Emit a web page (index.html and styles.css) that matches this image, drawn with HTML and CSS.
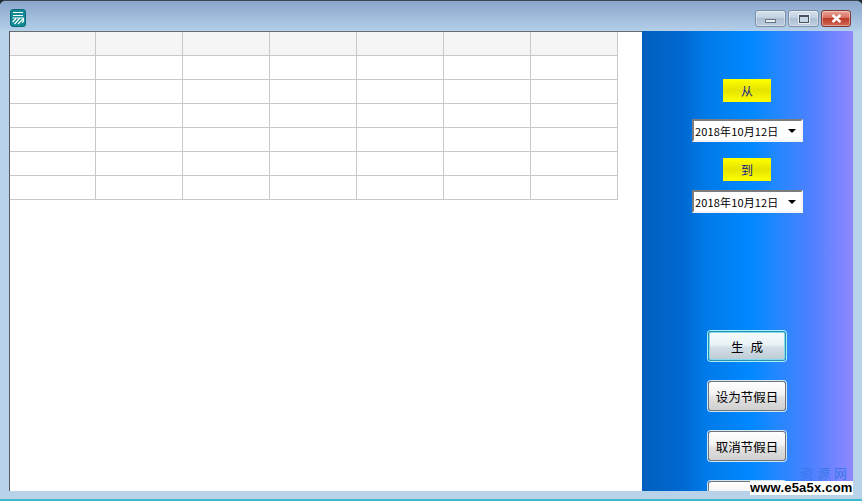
FILE: index.html
```
<!DOCTYPE html>
<html lang="zh">
<head>
<meta charset="utf-8">
<title>生成</title>
<link rel="stylesheet" href="styles.css">
</head>
<body>
<div class="window">
  <div class="titlebar">
    <svg class="app-icon" width="16" height="18" viewBox="0 0 16 18">
      <rect x="0.5" y="0.5" width="15" height="17" rx="2.5" fill="#0f8a94" stroke="#0a6a78"/>
      <path d="M3 3.5H13M3 6.5H13" stroke="#fff" stroke-width="1.2" fill="none"/>
      <path d="M2.5 9H13.5V12L12 14M2.5 13L6 9.5M4.5 15L9.5 9.5M8 15L13 10" stroke="#fff" stroke-width="1.2" fill="none"/>
    </svg>
    <div class="caption-buttons">
      <div class="cap-btn"><span class="glyph-min"></span></div>
      <div class="cap-btn"><span class="glyph-max"></span></div>
      <div class="cap-btn cap-close">
        <svg width="11" height="9" viewBox="0 0 11 9"><path d="M1.5 1L9.5 8M9.5 1L1.5 8" stroke="#fff" stroke-width="2.4" fill="none"/></svg>
      </div>
    </div>
  </div>
  <div class="client">
    <div class="main">
      <div class="grid">
        <div class="row head"><i></i><i></i><i></i><i></i><i></i><i></i><i></i></div>
        <div class="row"><i></i><i></i><i></i><i></i><i></i><i></i><i></i></div>
        <div class="row"><i></i><i></i><i></i><i></i><i></i><i></i><i></i></div>
        <div class="row"><i></i><i></i><i></i><i></i><i></i><i></i><i></i></div>
        <div class="row"><i></i><i></i><i></i><i></i><i></i><i></i><i></i></div>
        <div class="row"><i></i><i></i><i></i><i></i><i></i><i></i><i></i></div>
        <div class="row"><i></i><i></i><i></i><i></i><i></i><i></i><i></i></div>
      </div>
    </div>
    <div class="side">
      <div class="tag">从</div>
      <div class="combo"><span>2018年10月12日</span><b class="arrow"></b></div>
      <div class="tag tag-to">到</div>
      <div class="combo combo-to"><span>2018年10月12日</span><b class="arrow"></b></div>
      <div class="btn btn-first">生 成</div>
      <div class="btn">设为节假日</div>
      <div class="btn">取消节假日</div>
      <div class="btn">退 出</div>
    </div>
  </div>
</div>
<div class="wm-faint">资源网</div>
<div class="wm">www.e5a5x.com</div>
</body>
</html>
```
FILE: styles.css
```
* { box-sizing: border-box; }
html, body { margin: 0; height: 100%; overflow: hidden; background: #1a2a30; }
body { width: 862px; height: 501px; position: relative; font-family: "Noto Sans CJK SC", "Liberation Sans", sans-serif; font-size: 12px; color: #000; }
.window {
  width: 862px; height: 501px; display: flex; flex-direction: column;
  padding: 0 9px 10px 9px; border-top: 1px solid #3a4650; border-radius: 6px 6px 0 0;
  background: #b8d2ea;
  box-shadow: inset 0 -2px 0 #3fb7cf;
  overflow: hidden; position: relative;
}
.window::before {
  content: ""; position: absolute; left: 0; right: 0; top: 0; height: 30px;
  background: linear-gradient(#8aa6cb, #b3cfe9);
}
.titlebar { height: 29px; flex: none; display: flex; justify-content: space-between; align-items: flex-start; position: relative; padding: 8px 2px 0 1px; }
.app-icon { display: block; }
.caption-buttons { display: flex; gap: 2px; margin-top: 1px; }
.cap-btn {
  width: 31px; height: 17px; border: 1px solid #7d8fa5; border-radius: 3px;
  background: linear-gradient(#d6e1ee 0, #c2d0e0 45%, #aebfd3 50%, #bccde0 100%);
  display: flex; align-items: center; justify-content: center;
  box-shadow: inset 0 0 0 1px rgba(255,255,255,.4);
}
.cap-close { width: 30px; border-color: #7a3a34; background: linear-gradient(#e9a396 0, #d9705f 45%, #bb3a28 50%, #cf6a55 100%); }
.glyph-min { width: 11px; height: 4px; background: #e8eef6; border: 1px solid #6a7583; margin-top: 5px; }
.glyph-max { width: 10px; height: 8px; background: #c8d6e6; border: 1px solid #46505e; border-top-width: 2px; box-shadow: 0 0 0 1px #e8eef6; }
.client { flex: 1; display: flex; min-height: 0; }
.main { width: 633px; flex: none; background: #fff; border-left: 1px solid #55595e; border-top: 2px solid #6a6e73; }
.grid { width: 608px; border-right: 1px solid #c8c8c8; }
.row { display: flex; height: 24px; border-bottom: 1px solid #c8c8c8; }
.row i { width: 87px; flex: none; border-right: 1px solid #c8c8c8; }
.row i:first-child { width: 86px; }
.row i:last-child { border-right: 0; }
.head { background: #f5f5f5; }
.side {
  flex: 1; display: flex; flex-direction: column; align-items: center; overflow: hidden;
  padding: 49px 1px 0 0;
  background: linear-gradient(90deg, #005fbe 0, #0068d0 19%, #007ae8 30%, #0088ff 51%, #1e88ff 62%, #5080ff 81%, #9088ff 100%);
}
.tag {
  width: 48px; height: 23px; flex: none; display: flex; align-items: center; justify-content: center;
  color: #1a1a8a; font-size: 12px;
  background: linear-gradient(#ffff00 0, #e4e400 50%, #ffff00 100%);
}
.tag-to { margin-top: 16px; }
.combo {
  width: 111px; height: 23px; flex: none; margin-top: 17px; margin-left: 1px; display: flex; align-items: center; justify-content: space-between;
  padding: 0 5px 0 1px; background: #fff; border: 2px solid #f4f4f4; border-top-color: #7c7c7c; border-left-color: #7c7c7c;
  font-size: 11px; letter-spacing: 0.15px;
}
.combo-to { margin-top: 9px; }
.arrow { width: 0; height: 0; border: 4px solid transparent; border-top: 4px solid #000; border-bottom: 0; }
.btn {
  width: 78px; height: 30px; flex: none; margin-top: 20px; display: flex; align-items: center; justify-content: center;
  font-size: 12.5px; word-spacing: 4px; border: 1px solid #70757a; border-radius: 3px;
  background: linear-gradient(#fff 0, #f2f2f2 45%, #e2e2e2 55%, #cfcfcf 100%);
  box-shadow: 0 0 0 1px #cfe6f5;
}
.btn-first {
  margin-top: 118px; border-color: #2b8fb0; box-shadow: 0 0 0 1px #a8f0f8, inset 0 0 0 1px #7fdcf0;
  background: linear-gradient(#f6fbfd 0, #e9f2f6 45%, #d3dfe6 55%, #bccbd4 100%);
}
.wm { position: absolute; left: 750px; top: 481px; width: 103px; height: 14px; background: #fff; font-family: "Liberation Sans", sans-serif; font-weight: bold; font-size: 13px; line-height: 14px; letter-spacing: 0.2px; white-space: nowrap; overflow: hidden; }
.wm-faint { position: absolute; left: 800px; top: 465px; width: 53px; height: 16px; font-size: 13px; line-height: 16px; letter-spacing: 4px; color: #3a78ea; white-space: nowrap; overflow: hidden; }
```
